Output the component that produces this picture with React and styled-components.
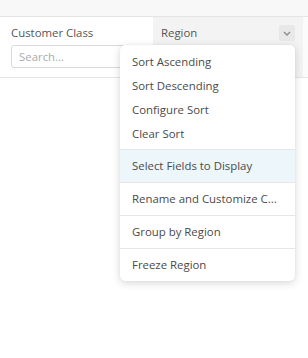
import styled, { createGlobalStyle } from "styled-components";

const GlobalStyle = createGlobalStyle`
    body {
        margin: 0;
        background: #ffffff;
        font-family: "Open Sans", "Noto Sans", sans-serif;
    }
`;

const menuGroups = [
    { compact: true, items: ["Sort Ascending", "Sort Descending", "Configure Sort", "Clear Sort"] },
    { items: ["Select Fields to Display"], active: 0 },
    { items: ["Rename and Customize C..."] },
    { items: ["Group by Region"] },
    { items: ["Freeze Region"] },
];

export default function App() {
    return (
        <>
            <GlobalStyle />
            <SCPage>
                <SCTopStrip />
                <SCHeaderRow>
                    <SCCell>
                        <SCLabel>Customer Class</SCLabel>
                        <SCSearch placeholder="Search..." />
                    </SCCell>
                    <SCCell $shaded>
                        <SCLabelRow>
                            <SCLabel>Region</SCLabel>
                            <SCChevronButton>
                                <svg width="8" height="5" viewBox="0 0 8 5">
                                    <path d="M1 1l3 3 3-3" fill="none" stroke="#8a8a8a" strokeWidth="1.3" />
                                </svg>
                            </SCChevronButton>
                        </SCLabelRow>
                    </SCCell>
                    <SCGutter />
                </SCHeaderRow>

                <SCMenu>
                    {menuGroups.map((group, gi) => (
                        <SCGroup key={gi} $compact={group.compact}>
                            {group.items.map((item, ii) => (
                                <SCItem key={item} $compact={group.compact} $active={group.active === ii}>
                                    {item}
                                </SCItem>
                            ))}
                        </SCGroup>
                    ))}
                </SCMenu>
            </SCPage>
        </>
    );
}

const SCPage = styled.div`
    position: relative;
    width: 308px;
    height: 358px;
    background: #ffffff;
`;

const SCTopStrip = styled.div`
    height: 16px;
    background: #f8f8f8;
    border-bottom: 1px solid #e4e4e4;
`;

const SCHeaderRow = styled.div`
    display: grid;
    grid-template-columns: 153px 150px 1fr;
    height: 60px;
    border-bottom: 1px solid #e6e6e6;
`;

const SCCell = styled.div`
    display: flex;
    flex-direction: column;
    gap: 4px;
    padding: 8px 8px 0 ${p => (p.$shaded ? "8px" : "11px")};
    background: ${p => (p.$shaded ? "#f3f3f3" : "#ffffff")};
`;

const SCGutter = styled.div`
    background: #fbfbfb;
`;

const SCLabelRow = styled.div`
    display: flex;
    align-items: center;
    justify-content: space-between;
`;

const SCLabel = styled.span`
    height: 16px;
    line-height: 16px;
    font-size: 11.4px;
    color: #555555;
`;

const SCSearch = styled.input`
    box-sizing: border-box;
    width: 134px;
    height: 23px;
    padding: 0 7px;
    border: 1px solid #d9d9d9;
    border-radius: 3px;
    font-family: "Open Sans", "Noto Sans", sans-serif;
    font-size: 11.4px;
    color: #444;
    outline: none;

    &::placeholder {
        color: #ababab;
    }
`;

const SCChevronButton = styled.div`
    width: 16px;
    height: 16px;
    border-radius: 2px;
    background: #e8e8e8;
    display: flex;
    align-items: center;
    justify-content: center;
`;

const SCMenu = styled.div`
    position: absolute;
    left: 120px;
    top: 45px;
    width: 175px;
    background: #ffffff;
    border-radius: 5px;
    box-shadow: 0 2px 8px rgba(0, 0, 0, 0.16), 0 0 1px rgba(0, 0, 0, 0.12);
    overflow: hidden;
`;

const SCGroup = styled.div`
    padding: ${p => (p.$compact ? "5px 0 3px" : "0")};
    & + & {
        border-top: 1px solid #e6e6e6;
    }
`;

const SCItem = styled.div`
    height: ${p => (p.$compact ? "24px" : "32px")};
    line-height: ${p => (p.$compact ? "24px" : "32px")};
    padding: 0 12px;
    font-size: 11.4px;
    color: #4a4a4a;
    white-space: nowrap;
    background: ${p => (p.$active ? "#ecf6fb" : "transparent")};
`;
